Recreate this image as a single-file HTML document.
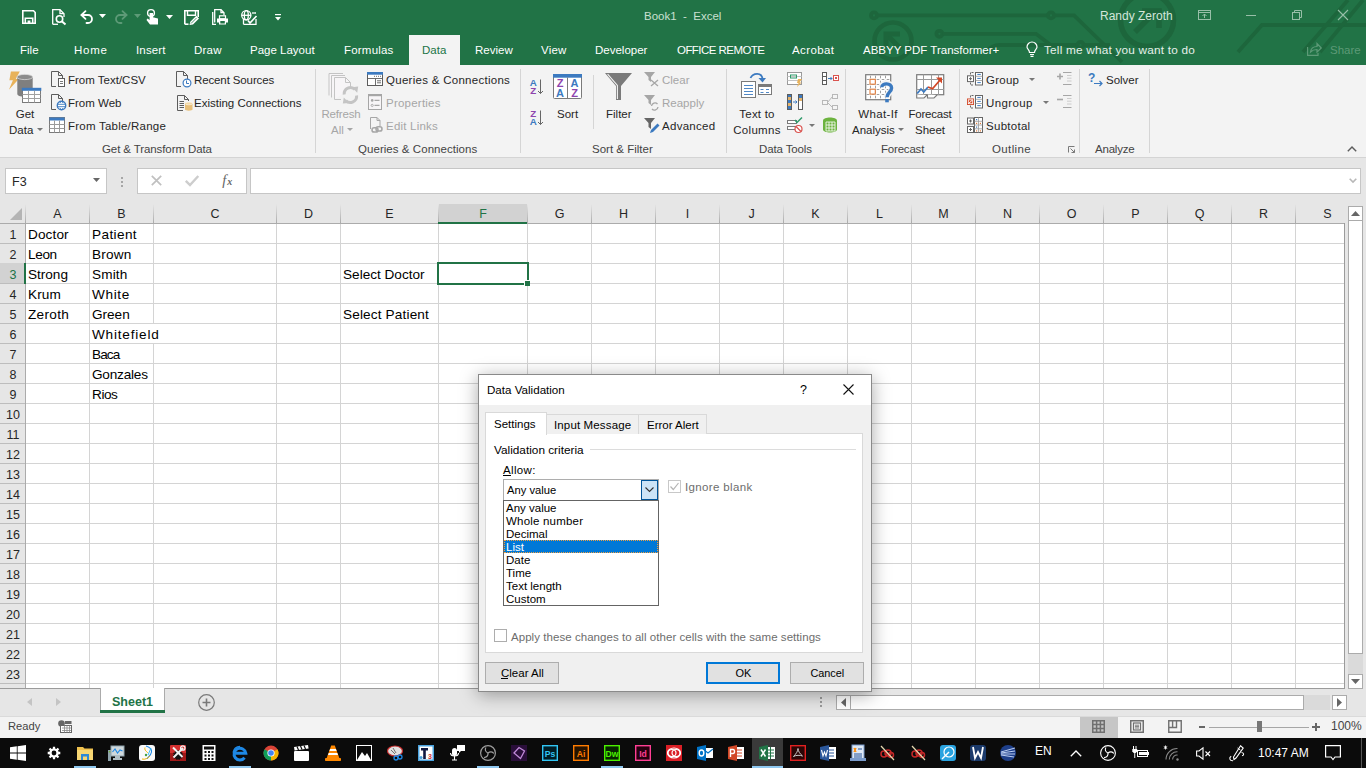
<!DOCTYPE html>
<html><head><meta charset="utf-8"><title>Excel Data Validation</title>
<style>
html,body{margin:0;padding:0;width:1366px;height:768px;overflow:hidden;background:#fff;}
body{position:relative;font-family:"Liberation Sans",sans-serif;}
.t{position:absolute;white-space:nowrap;line-height:20px;font-family:"Liberation Sans",sans-serif;}
svg{overflow:visible}
</style></head><body>
<div style="position:absolute;left:0px;top:0px;width:1366px;height:65px;background:#217346"></div>
<svg style="position:absolute;left:860px;top:0px;" width="506" height="65" viewBox="0 0 506 65">
<g fill="none" stroke="#1d663c" stroke-width="3.8" stroke-linecap="butt">
<circle cx="14" cy="15.4" r="3"/><line x1="17" y1="15.4" x2="188" y2="15.4"/>
<circle cx="191" cy="15.4" r="3"/><path d="M194 15.4 H214 L262 62"/>
<circle cx="79.4" cy="33.8" r="3"/><path d="M82.4 33.8 H176 L192 46"/>
<path d="M126 52 C130 47 134 45 140 45 H217"/><circle cx="220.5" cy="45" r="3"/><path d="M223.5 45 H250"/>
<circle cx="33" cy="41" r="18.5" stroke-width="4.6"/>
<path d="M41 49 L26 34" stroke-width="5"/><path d="M23.5 34 H40 M26 31.5 V48" stroke-width="5"/>
<circle cx="287" cy="20" r="26.5" stroke-width="5.5"/>
<path d="M275 32 L296 11" stroke-width="5.5"/><path d="M282 11 H299 V28" stroke-width="5.5"/>
<path d="M378 52 L402 25 H506"/>
<path d="M488 0 L443 52"/><path d="M503 0 L460 52"/>
</g></svg>
<svg style="position:absolute;left:22px;top:10px;" width="14" height="14" viewBox="0 0 14 14"><g fill="none" stroke="#ffffff" stroke-width="1.6"><path d="M0.8 0.8 H11.5 L13.2 2.5 V13.2 H0.8Z"/><path d="M3.3 13 V8.3 H10.7 V13"/></g><rect x="5.6" y="10.5" width="2.8" height="2.7" fill="#ffffff"/></svg>
<svg style="position:absolute;left:52px;top:9px;" width="15" height="16" viewBox="0 0 15 16"><g fill="none" stroke="#ffffff" stroke-width="1.3"><path d="M0.7 15.3 V0.7 H8 L12 4.7 V8"/><path d="M8 0.7 V4.7 H12"/><path d="M0.7 15.3 H6"/><circle cx="7.5" cy="10" r="3.2" stroke-width="1.6"/><path d="M9.8 12.3 L13.5 15.5" stroke-width="2"/></g></svg>
<svg style="position:absolute;left:80px;top:10px;" width="14" height="13" viewBox="0 0 14 13"><g fill="none" stroke="#ffffff" stroke-width="1.8" stroke-linecap="round"><path d="M1.5 5 L5.5 1.2 M1.5 5 L5.5 8.8"/><path d="M1.5 5 H8 A4 4 0 0 1 8 13 H6.5"/></g></svg>
<svg style="position:absolute;left:99px;top:14px;" width="7" height="4" viewBox="0 0 7 4"><path d="M0 0 H7 L3.5 4Z" fill="#ffffff"/></svg>
<svg style="position:absolute;left:114px;top:10px;" width="14" height="13" viewBox="0 0 14 13"><g fill="none" stroke="#5d9a77" stroke-width="1.8" stroke-linecap="round"><path d="M12.5 5 L8.5 1.2 M12.5 5 L8.5 8.8"/><path d="M12.5 5 H6 A4 4 0 0 0 6 13 H7.5"/></g></svg>
<svg style="position:absolute;left:134px;top:14px;" width="7" height="4" viewBox="0 0 7 4"><path d="M0 0 H7 L3.5 4Z" fill="#5d9a77"/></svg>
<svg style="position:absolute;left:146px;top:9px;" width="13" height="16" viewBox="0 0 13 16"><g fill="#ffffff"><circle cx="5" cy="4" r="3.4" fill="none" stroke="#ffffff" stroke-width="1.4"/><path d="M3.6 4 V11 L1.5 9.5 L0.5 11 L4 15.5 H12 V9.5 L7 8.2 V4Z"/></g></svg>
<svg style="position:absolute;left:166px;top:15px;" width="7" height="4" viewBox="0 0 7 4"><path d="M0 0 H7 L3.5 4Z" fill="#ffffff"/></svg>
<svg style="position:absolute;left:184px;top:10px;" width="15" height="15" viewBox="0 0 15 15"><g fill="none" stroke="#ffffff" stroke-width="1.6"><path d="M0.8 14.2 V0.8 H14.2 V7"/><path d="M3.5 1 V5.2 H11.5 V1" stroke-width="1.4"/><path d="M0.8 14.2 H4.5"/></g><path d="M5.5 15 L6.3 11.8 L12.3 5.8 L15 8.5 L9 14.5Z" fill="#ffffff"/><path d="M7 13.5 L12.5 8" stroke="#217346" stroke-width="0.8"/></svg>
<svg style="position:absolute;left:212px;top:9px;" width="17" height="16" viewBox="0 0 17 16"><g fill="none" stroke="#ffffff" stroke-width="1.3"><path d="M2.7 13.5 V0.7 H9 L12 3.7 V6"/><path d="M9 0.7 V3.7 H12"/><path d="M0.7 3 V15.3 H4"/></g><rect x="7.5" y="6.8" width="6" height="3" fill="none" stroke="#ffffff" stroke-width="1.2"/><path d="M5 9.5 H16 V13.5 H14 V15.5 H7 V13.5 H5Z" fill="#ffffff"/><rect x="8.3" y="12" width="4.5" height="2.5" fill="#217346"/></svg>
<svg style="position:absolute;left:241px;top:10px;" width="16" height="15" viewBox="0 0 16 15"><g fill="none" stroke="#ffffff" stroke-width="1.3"><circle cx="5.3" cy="5.3" r="4.6"/><ellipse cx="5.3" cy="5.3" rx="2" ry="4.6"/><path d="M0.7 5.3 H10"/><path d="M2.5 14.3 V8.5"/><path d="M11 3 H15"/><path d="M2.5 14.3 H15 V9"/><path d="M7 10.5 L9 13 L15.5 6" stroke-width="1.7"/></g></svg>
<svg style="position:absolute;left:275px;top:14px;" width="6" height="7" viewBox="0 0 6 7"><g fill="#ffffff"><rect x="0" y="0" width="6" height="1.2"/><path d="M0 3 H6 L3 6.5Z"/></g></svg>
<div class="t" style="left:644px;top:6px;font-size:11.5px;color:#c9e0d1;font-weight:normal;">Book1&nbsp; -&nbsp; Excel</div>
<div class="t" style="left:1100px;top:6px;font-size:12px;color:#d3e6da;font-weight:normal;">Randy Zeroth</div>
<svg style="position:absolute;left:1198px;top:10px;" width="13" height="10" viewBox="0 0 13 10"><g fill="none" stroke="#98bfa8" stroke-width="1"><rect x="0.5" y="0.5" width="12" height="9"/><path d="M0.5 2.5 H12.5"/><path d="M6.5 8 V4 M4.5 6 L6.5 4 L8.5 6"/></g></svg>
<div style="position:absolute;left:1246px;top:15px;width:10px;height:1px;background:#98bfa8"></div>
<svg style="position:absolute;left:1292px;top:10px;" width="10" height="10" viewBox="0 0 10 10"><g fill="none" stroke="#98bfa8" stroke-width="1"><rect x="0.5" y="2.5" width="7" height="7"/><path d="M2.5 2.5 V0.5 H9.5 V7.5 H7.5"/></g></svg>
<svg style="position:absolute;left:1338px;top:10px;" width="10" height="10" viewBox="0 0 10 10"><g stroke="#98bfa8" stroke-width="1.1"><path d="M0 0 L10 10 M10 0 L0 10"/></g></svg>
<div class="t" style="left:20px;top:40px;font-size:11.5px;color:#ffffff;font-weight:normal;letter-spacing:0px">File</div>
<div class="t" style="left:74px;top:40px;font-size:11.5px;color:#ffffff;font-weight:normal;letter-spacing:0.75px">Home</div>
<div class="t" style="left:136px;top:40px;font-size:11.5px;color:#ffffff;font-weight:normal;letter-spacing:0.15px">Insert</div>
<div class="t" style="left:194px;top:40px;font-size:11.5px;color:#ffffff;font-weight:normal;letter-spacing:0.2px">Draw</div>
<div class="t" style="left:250px;top:40px;font-size:11.5px;color:#ffffff;font-weight:normal;letter-spacing:0px">Page Layout</div>
<div class="t" style="left:344px;top:40px;font-size:11.5px;color:#ffffff;font-weight:normal;letter-spacing:0.2px">Formulas</div>
<div class="t" style="left:475px;top:40px;font-size:11.5px;color:#ffffff;font-weight:normal;letter-spacing:0px">Review</div>
<div class="t" style="left:541px;top:40px;font-size:11.5px;color:#ffffff;font-weight:normal;letter-spacing:0.2px">View</div>
<div class="t" style="left:595px;top:40px;font-size:11.5px;color:#ffffff;font-weight:normal;letter-spacing:0px">Developer</div>
<div class="t" style="left:677px;top:40px;font-size:11.5px;color:#ffffff;font-weight:normal;letter-spacing:-0.55px">OFFICE REMOTE</div>
<div class="t" style="left:792px;top:40px;font-size:11.5px;color:#ffffff;font-weight:normal;letter-spacing:0.4px">Acrobat</div>
<div class="t" style="left:863px;top:40px;font-size:11.5px;color:#ffffff;font-weight:normal;letter-spacing:0px">ABBYY PDF Transformer+</div>
<div style="position:absolute;left:409px;top:35px;width:51px;height:30px;background:#f3f3f3"></div>
<div class="t" style="left:422px;top:40px;font-size:11.5px;color:#217346;font-weight:normal;">Data</div>
<svg style="position:absolute;left:1026px;top:42px;" width="12" height="15" viewBox="0 0 12 15"><g fill="none" stroke="#ffffff" stroke-width="1.2"><path d="M3.5 10.5 C3.5 8 1 7 1 5 A5 5 0 0 1 11 5 C11 7 8.5 8 8.5 10.5Z"/><path d="M4 12.5 H8 M4.5 14.3 H7.5"/></g></svg>
<div class="t" style="left:1044px;top:40px;font-size:11.8px;color:#e6f0ea;font-weight:normal;letter-spacing:0.2px">Tell me what you want to do</div>
<svg style="position:absolute;left:1307px;top:42px;" width="15" height="14" viewBox="0 0 15 14"><g fill="none" stroke="#5d9a77" stroke-width="1.2"><path d="M0.6 5 V13.4 H11 V11"/><path d="M3.5 10 C4 6 7 4.5 10 4.5 V1.5 L14.3 6 L10 10.2 V7.5 C7 7.5 5 8.5 3.5 10Z"/></g></svg>
<div class="t" style="left:1330px;top:40px;font-size:11.5px;color:#5d9a77;font-weight:normal;">Share</div>
<div style="position:absolute;left:0px;top:65px;width:1366px;height:92px;background:#f3f3f3"></div>
<div style="position:absolute;left:0px;top:157px;width:1366px;height:1px;background:#d4d4d4"></div>
<div style="position:absolute;left:315px;top:69px;width:1px;height:84px;background:#d5d5d5"></div>
<div style="position:absolute;left:520px;top:69px;width:1px;height:84px;background:#d5d5d5"></div>
<div style="position:absolute;left:726px;top:69px;width:1px;height:84px;background:#d5d5d5"></div>
<div style="position:absolute;left:845px;top:69px;width:1px;height:84px;background:#d5d5d5"></div>
<div style="position:absolute;left:959px;top:69px;width:1px;height:84px;background:#d5d5d5"></div>
<div style="position:absolute;left:1079px;top:69px;width:1px;height:84px;background:#d5d5d5"></div>
<div style="position:absolute;left:1149px;top:69px;width:1px;height:84px;background:#d5d5d5"></div>
<div style="position:absolute;left:593px;top:75px;width:1px;height:54px;background:#d5d5d5"></div>
<div class="t" style="left:102px;top:139px;font-size:11.5px;color:#444444;font-weight:normal;letter-spacing:-0.1px;">Get &amp; Transform Data</div>
<div class="t" style="left:358px;top:139px;font-size:11.5px;color:#444444;font-weight:normal;letter-spacing:0.05px;">Queries &amp; Connections</div>
<div class="t" style="left:592px;top:139px;font-size:11.5px;color:#444444;font-weight:normal;">Sort &amp; Filter</div>
<div class="t" style="left:759px;top:139px;font-size:11.5px;color:#444444;font-weight:normal;letter-spacing:-0.12px;">Data Tools</div>
<div class="t" style="left:881px;top:139px;font-size:11.5px;color:#444444;font-weight:normal;letter-spacing:-0.2px;">Forecast</div>
<div class="t" style="left:992px;top:139px;font-size:11.5px;color:#444444;font-weight:normal;letter-spacing:0.38px;">Outline</div>
<div class="t" style="left:1095px;top:139px;font-size:11.5px;color:#444444;font-weight:normal;letter-spacing:-0.22px;">Analyze</div>
<svg style="position:absolute;left:9px;top:71px;" width="33" height="33" viewBox="0 0 33 33">
<path d="M1.9 0.4 H10.8 L6.8 7.9 H9.8 L-0.1 18.7 L3.9 9.3 H0.4Z" fill="#e8b25a"/>
<path d="M8.3 6 V23 C8.3 24.5 11 25.7 15.8 25.7 C20.6 25.7 23.7 24.5 23.7 23 V6Z" fill="#7f7f7f"/>
<ellipse cx="15.8" cy="6" rx="7.9" ry="2.6" fill="#8c8c8c" stroke="#d8d8d8" stroke-width="0.8"/>
<rect x="13.5" y="17.5" width="18" height="14" fill="#fff" stroke="#7a7a7a" stroke-width="1"/>
<rect x="12.8" y="16.8" width="19.5" height="3" fill="#3c7ac0"/>
<path d="M13.5 23.5 H31.5 M13.5 27.5 H31.5 M19.5 19.8 V31.5 M25.5 19.8 V31.5" stroke="#a0a0a0" stroke-width="1"/>
</svg>
<div class="t" style="left:-175px;width:400px;text-align:center;top:104px;font-size:11.5px;color:#262626;font-weight:normal;">Get</div>
<div class="t" style="left:9px;top:120px;font-size:11.5px;color:#262626;font-weight:normal;">Data</div>
<svg style="position:absolute;left:37px;top:128px;" width="6" height="3" viewBox="0 0 6 3"><path d="M0 0 H6 L3 3Z" fill="#777"/></svg>
<svg style="position:absolute;left:50px;top:71px;" width="16" height="16" viewBox="0 0 16 16"><g fill="none" stroke="#5c5c5c" stroke-width="1"><path d="M1.5 15.5 V0.5 H8.5 L12.5 4.5 V8"/><path d="M8.5 0.5 V4.5 H12.5"/><path d="M1.5 15.5 H6"/></g><rect x="8.5" y="7.5" width="6" height="8" fill="#fff" stroke="#5c5c5c"/><path d="M10 10.5 H13 M10 12.5 H13" stroke="#7a7a7a" stroke-width="1"/></svg>
<div class="t" style="left:68px;top:70px;font-size:11.5px;color:#262626;font-weight:normal;">From Text/CSV</div>
<svg style="position:absolute;left:50px;top:94px;" width="16" height="16" viewBox="0 0 16 16"><g fill="none" stroke="#5c5c5c" stroke-width="1"><path d="M1.5 15.5 V0.5 H8.5 L12.5 4.5 V8"/><path d="M8.5 0.5 V4.5 H12.5"/><path d="M1.5 15.5 H6"/></g><circle cx="11.5" cy="11.5" r="4.2" fill="#fff" stroke="#3c7ac0" stroke-width="1.4"/><path d="M7.5 10.3 H15.5 M7.5 12.7 H15.5" stroke="#3c7ac0" stroke-width="0.9"/><path d="M11.5 7.3 L9.8 9 M11.5 7.3 L13.2 9 M11.5 15.7 L9.8 14 M11.5 15.7 L13.2 14" stroke="#3c7ac0" stroke-width="0.9"/></svg>
<div class="t" style="left:68px;top:93px;font-size:11.5px;color:#262626;font-weight:normal;">From Web</div>
<svg style="position:absolute;left:49px;top:117px;" width="16" height="16" viewBox="0 0 16 16"><rect x="0.5" y="0.5" width="15" height="15" fill="#fff" stroke="#7a7a7a"/><rect x="0.5" y="0.5" width="15" height="3" fill="#3c7ac0"/><path d="M0.5 7.5 H15.5 M0.5 11.5 H15.5 M5.5 3.5 V15.5 M10.5 3.5 V15.5" stroke="#9a9a9a"/></svg>
<div class="t" style="left:68px;top:116px;font-size:11.5px;color:#262626;font-weight:normal;letter-spacing:0.23px;">From Table/Range</div>
<svg style="position:absolute;left:175px;top:71px;" width="16" height="16" viewBox="0 0 16 16"><g fill="none" stroke="#5c5c5c" stroke-width="1"><path d="M1.5 15.5 V0.5 H8.5 L12.5 4.5 V8"/><path d="M8.5 0.5 V4.5 H12.5"/><path d="M1.5 15.5 H6"/></g><circle cx="12" cy="12" r="3.9" fill="#fff" stroke="#3c7ac0" stroke-width="1.2"/><path d="M11.5 9.5 V12.5 H14" fill="none" stroke="#3c7ac0" stroke-width="1"/></svg>
<div class="t" style="left:194px;top:70px;font-size:11.5px;color:#262626;font-weight:normal;letter-spacing:-0.12px;">Recent Sources</div>
<svg style="position:absolute;left:177px;top:95px;" width="16" height="16" viewBox="0 0 16 16"><g fill="none" stroke="#5c5c5c" stroke-width="1"><path d="M0.5 15.5 V0.5 H7.5 L11.5 4.5 V6"/><path d="M7.5 0.5 V4.5 H11.5"/><path d="M0.5 15.5 H6"/><path d="M2.5 6.5 H7 M2.5 8.5 H7 M2.5 10.5 H7 M2.5 12.5 H7"/></g><path d="M8 8.5 C8 7 15.5 7 15.5 8.5 V14.5 C15.5 16 8 16 8 14.5Z" fill="#e8c07a"/><ellipse cx="11.75" cy="8.5" rx="3.75" ry="1.3" fill="#f3d9a6" stroke="#fff" stroke-width="0.5"/></svg>
<div class="t" style="left:194px;top:93px;font-size:11.5px;color:#262626;font-weight:normal;">Existing Connections</div>
<svg style="position:absolute;left:328px;top:73px;" width="31" height="30" viewBox="0 0 31 30"><g fill="#f7f5f7" stroke="#c4c4c4" stroke-width="1">
<path d="M1 22.5 V0.5 H15"/><path d="M3.5 24.5 V2.5 H17"/><path d="M6.5 26.5 V4.5 H17.5 L22.5 9.5 V15"/><path d="M17.5 4.5 V9.5 H22.5" fill="none"/><path d="M6.5 26.5 H13" fill="none"/></g>
<g fill="none" stroke="#c4c4c4" stroke-width="3"><path d="M16.2 21.5 A6.3 6.3 0 0 1 27 16.5"/><path d="M28.6 22.5 A6.3 6.3 0 0 1 17.8 27.5"/></g>
<path d="M24 14.2 L30.2 13.5 L29.2 19.8Z M21 30 L14.8 30.6 L15.8 24.4Z" fill="#c4c4c4"/></svg>
<div class="t" style="left:141px;width:400px;text-align:center;top:104px;font-size:11.5px;color:#a6a6a6;font-weight:normal;letter-spacing:-0.18px;">Refresh</div>
<div class="t" style="left:331px;top:120px;font-size:11.5px;color:#a6a6a6;font-weight:normal;">All</div>
<svg style="position:absolute;left:347px;top:128px;" width="6" height="3" viewBox="0 0 6 3"><path d="M0 0 H6 L3 3Z" fill="#a6a6a6"/></svg>
<svg style="position:absolute;left:367px;top:72px;" width="16" height="14" viewBox="0 0 16 14"><rect x="0.5" y="0.5" width="15" height="13" fill="#fff" stroke="#5c5c5c"/><rect x="0" y="0" width="16" height="2.7" fill="#3c7ac0"/><path d="M0.5 6.5 H15.5 M8.5 6.5 V13.5 M10 8.8 H14 M10 10.8 H14" stroke="#5c5c5c" stroke-width="0.9"/><path d="M7 4.3 H8 M9 4.3 H10 M11 4.3 H12 M13 4.3 H14" stroke="#5c5c5c" stroke-width="0.9"/></svg>
<div class="t" style="left:386px;top:70px;font-size:11.5px;color:#262626;font-weight:normal;letter-spacing:0.28px;">Queries &amp; Connections</div>
<svg style="position:absolute;left:368px;top:94px;" width="14" height="16" viewBox="0 0 14 16"><rect x="0.5" y="0.5" width="13" height="15" fill="#f7f5f7" stroke="#a6a6a6"/><rect x="0" y="0" width="14" height="2.2" fill="#a6a6a6"/><circle cx="4.2" cy="6.4" r="1.3" fill="#a6a6a6"/><circle cx="4.2" cy="11.4" r="1.1" fill="none" stroke="#a6a6a6" stroke-width="0.9"/><path d="M6.5 6.4 H11.5 M6.5 11.4 H11.5" stroke="#a6a6a6" stroke-width="1.1"/></svg>
<div class="t" style="left:386px;top:93px;font-size:11.5px;color:#a6a6a6;font-weight:normal;letter-spacing:0.23px;">Properties</div>
<svg style="position:absolute;left:369px;top:117px;" width="14" height="16" viewBox="0 0 14 16"><g fill="none" stroke="#a6a6a6"><path d="M1.5 12 V0.5 H8 L11 3.5 V9"/><path d="M8 0.5 V3.5 H11"/></g><g fill="none" stroke="#a6a6a6" stroke-width="1.5"><rect x="3" y="10.8" width="6" height="4.2" rx="2.1"/><rect x="7" y="9.8" width="6" height="4.2" rx="2.1"/></g></svg>
<div class="t" style="left:386px;top:116px;font-size:11.5px;color:#a6a6a6;font-weight:normal;letter-spacing:0.22px;">Edit Links</div>
<svg style="position:absolute;left:530px;top:79px;" width="14" height="16" viewBox="0 0 14 16"><text x="3.3" y="7.2" text-anchor="middle" font-family="Liberation Sans" font-size="9.8" font-weight="bold" fill="#3c7ac0" transform="scale(1,0.92)">A</text><text x="3.3" y="15.2" text-anchor="middle" font-family="Liberation Sans" font-size="9.8" font-weight="bold" fill="#8e44ad" transform="scale(1,0.98)">Z</text><path d="M10.5 0.5 V14.5 M8 12 L10.5 14.5 L13 12" fill="none" stroke="#666" stroke-width="1"/></svg>
<svg style="position:absolute;left:530px;top:110px;" width="14" height="16" viewBox="0 0 14 16"><text x="3.3" y="7.2" text-anchor="middle" font-family="Liberation Sans" font-size="9.8" font-weight="bold" fill="#8e44ad" transform="scale(1,0.92)">Z</text><text x="3.3" y="15.2" text-anchor="middle" font-family="Liberation Sans" font-size="9.8" font-weight="bold" fill="#3c7ac0" transform="scale(1,0.98)">A</text><path d="M10.5 0.5 V14.5 M8 12 L10.5 14.5 L13 12" fill="none" stroke="#666" stroke-width="1"/></svg>
<svg style="position:absolute;left:553px;top:74px;" width="29" height="25" viewBox="0 0 29 25"><rect x="0.5" y="0.5" width="28" height="24" rx="1" fill="#fff" stroke="#7a7a7a"/><rect x="0" y="0" width="29" height="3.7" fill="#3c7ac0"/><path d="M14.5 3.5 V24.5" stroke="#7a7a7a"/><g font-family="Liberation Sans" font-size="11" font-weight="bold" text-anchor="middle"><text x="7" y="13" fill="#8e44ad">Z</text><text x="7" y="23" fill="#3c7ac0">A</text><text x="21.5" y="13" fill="#3c7ac0">A</text><text x="21.5" y="23" fill="#8e44ad">Z</text></g></svg>
<div class="t" style="left:557px;top:104px;font-size:11.5px;color:#262626;font-weight:normal;">Sort</div>
<svg style="position:absolute;left:605px;top:73px;" width="27" height="27" viewBox="0 0 27 27"><path d="M0 0 H27 L16 13 V27 H11 V13Z" fill="#7a7a7a"/><path d="M2.6 1.2 L12.4 12.4 V26" fill="none" stroke="#f3f3f3" stroke-width="1.1"/></svg>
<div class="t" style="left:606px;top:104px;font-size:11.5px;color:#262626;font-weight:normal;">Filter</div>
<svg style="position:absolute;left:644px;top:72px;" width="15" height="15" viewBox="0 0 15 15"><path d="M0 0 H11 L7 5 V10 L4.5 8 V5Z" fill="#a6a6a6"/><path d="M7 8 L14 14 M14 8 L7 14" stroke="#a6a6a6" stroke-width="1.3"/></svg>
<div class="t" style="left:662px;top:70px;font-size:11.5px;color:#a6a6a6;font-weight:normal;">Clear</div>
<svg style="position:absolute;left:644px;top:95px;" width="15" height="15" viewBox="0 0 15 15"><path d="M0 0 H11 L7 5 V10 L4.5 8 V5Z" fill="#a6a6a6"/><g fill="none" stroke="#a6a6a6" stroke-width="1.3"><path d="M7.5 11 A3.5 3.5 0 0 1 13.5 9"/><path d="M14 12 A3.5 3.5 0 0 1 8 14"/></g></svg>
<div class="t" style="left:662px;top:93px;font-size:11.5px;color:#a6a6a6;font-weight:normal;">Reapply</div>
<svg style="position:absolute;left:644px;top:118px;" width="16" height="16" viewBox="0 0 16 16"><path d="M0 0 H11 L7 5 V11 L4.5 9 V5Z" fill="#666"/><path d="M6 15 L7 12 L13.5 5.5 L15.5 7.5 L9 14Z" fill="#3c7ac0"/></svg>
<div class="t" style="left:662px;top:116px;font-size:11.5px;color:#262626;font-weight:normal;letter-spacing:0.28px;">Advanced</div>
<svg style="position:absolute;left:741px;top:73px;" width="31" height="27" viewBox="0 0 31 27"><rect x="0.5" y="8.5" width="14" height="16" fill="#fff" stroke="#7a7a7a"/><path d="M3 12.5 H12 M3 15.5 H12 M3 18.5 H12 M3 21.5 H12" stroke="#3c7ac0" stroke-width="0.9"/><rect x="17.5" y="11.5" width="13" height="10" fill="#fff" stroke="#7a7a7a"/><rect x="17.5" y="11.5" width="13" height="2.5" fill="#7a7a7a"/><path d="M19.5 16.5 H22.5 M25 16.5 H28 M19.5 19.5 H22.5 M25 19.5 H28" stroke="#3c7ac0" stroke-width="0.9"/><path d="M9.5 5 C12 -0.5 21 -1 21.5 6" fill="none" stroke="#3c7ac0" stroke-width="1.8"/><path d="M17.5 5 L21.5 9.5 L25 5Z" fill="#3c7ac0"/></svg>
<div class="t" style="left:557px;width:400px;text-align:center;top:104px;font-size:11.5px;color:#262626;font-weight:normal;letter-spacing:0.2px;">Text to</div>
<div class="t" style="left:557px;width:400px;text-align:center;top:120px;font-size:11.5px;color:#262626;font-weight:normal;letter-spacing:0.3px;">Columns</div>
<svg style="position:absolute;left:787px;top:72px;" width="16" height="15" viewBox="0 0 16 15"><rect x="0.5" y="0.5" width="14" height="12" fill="#fff" stroke="#9a9a9a"/><path d="M0.5 4.5 H14.5 M0.5 8.5 H14.5" stroke="#c4c4c4"/><rect x="3.5" y="3" width="6" height="3" fill="none" stroke="#2e9a6a"/><path d="M11 7 H15 L12.5 10.5 H14.5 L10 15 L11.5 11 H10Z" fill="#e8b25a"/></svg>
<svg style="position:absolute;left:787px;top:94px;" width="16" height="16" viewBox="0 0 16 16"><rect x="0.5" y="0.5" width="4" height="15" fill="#fff" stroke="#5c5c5c"/><rect x="1" y="3" width="3" height="3" fill="#e3b36b"/><rect x="1" y="9" width="3" height="3" fill="#e3b36b"/><rect x="1" y="1" width="3" height="2" fill="#3c7ac0"/><rect x="1" y="6" width="3" height="3" fill="#3c7ac0"/><rect x="1" y="12" width="3" height="3" fill="#3c7ac0"/><rect x="11.5" y="0.5" width="4" height="15" fill="#fff" stroke="#5c5c5c"/><rect x="12" y="1" width="3" height="3" fill="#3c7ac0"/><rect x="12" y="4" width="3" height="3" fill="#e3b36b"/><path d="M6 8 H10 M8.5 6.5 L10 8 L8.5 9.5" stroke="#3c7ac0" fill="none"/></svg>
<svg style="position:absolute;left:787px;top:117px;" width="16" height="16" viewBox="0 0 16 16"><rect x="0.5" y="3.5" width="9" height="3" fill="#fff" stroke="#7a7a7a"/><rect x="0.5" y="9.5" width="9" height="3" fill="#fff" stroke="#7a7a7a"/><path d="M8 3 L10 5.5 L15 0.5" fill="none" stroke="#2e9a6a" stroke-width="1.5"/><circle cx="11.5" cy="12" r="3.5" fill="#fff" stroke="#d9534f" stroke-width="1.2"/><path d="M9 9.5 L14 14.5" stroke="#d9534f" stroke-width="1.2"/></svg>
<svg style="position:absolute;left:809px;top:124px;" width="6" height="3" viewBox="0 0 6 3"><path d="M0 0 H6 L3 3Z" fill="#777"/></svg>
<svg style="position:absolute;left:822px;top:72px;" width="17" height="13" viewBox="0 0 17 13"><rect x="0.5" y="0.5" width="4" height="12" fill="#fff" stroke="#5c5c5c"/><path d="M0.5 4.5 H4.5 M0.5 8.5 H4.5" stroke="#5c5c5c"/><path d="M6 6.5 H10 M8.5 5 L10 6.5 L8.5 8" stroke="#3c7ac0" fill="none"/><rect x="11.5" y="3.5" width="5" height="5" fill="#fff" stroke="#d9534f"/><rect x="13" y="5" width="2" height="2" fill="#d9534f"/></svg>
<svg style="position:absolute;left:822px;top:94px;" width="16" height="16" viewBox="0 0 16 16"><g fill="#f5f5f5" stroke="#b8b8b8"><rect x="0.5" y="6.5" width="5" height="4"/><rect x="10.5" y="0.5" width="5" height="4"/><rect x="10.5" y="11.5" width="5" height="4"/><path d="M5.5 8.5 L10.5 2.5 M5.5 8.5 L10.5 13.5" fill="none"/></g></svg>
<svg style="position:absolute;left:822px;top:117px;" width="16" height="16" viewBox="0 0 16 16"><path d="M1 3.5 C1 -0.5 15 -0.5 15 3.5 V12.5 C15 16.5 1 16.5 1 12.5Z" fill="#6db33f"/><path d="M4 5 H13 V14 H4Z M4 8 H13 M4 11 H13 M7 5 V14 M10 5 V14" fill="none" stroke="#ffffff" stroke-width="0.8"/></svg>
<svg style="position:absolute;left:865px;top:74px;" width="29" height="29" viewBox="0 0 29 29"><rect x="0.7" y="0.7" width="25" height="25" fill="#fff" stroke="#7a7a7a" stroke-width="1.2"/><path d="M0.5 5.5 H26 M0.5 10.5 H26 M0.5 15.5 H26 M0.5 20.5 H26 M5.5 0.5 V26 M10.5 0.5 V26 M15.5 0.5 V26 M20.5 0.5 V26" stroke="#a0a0a0" stroke-width="1" stroke-dasharray="2.6 2.4" stroke-dashoffset="-1.2"/><rect x="5" y="5.3" width="5.3" height="4.9" fill="#fff" stroke="#e07b39" stroke-width="1.1"/><rect x="5" y="15.2" width="5.3" height="4.9" fill="#fff" stroke="#e07b39" stroke-width="1.1"/><path d="M16.5 13 C16.5 8 27 8 27 14 C27 18.5 22 18.5 22 23.5" fill="none" stroke="#f3f3f3" stroke-width="6"/><path d="M16.8 13.2 C16.8 8.6 26.6 8.6 26.6 14 C26.6 18 22 18.3 22 23.2" fill="none" stroke="#3c7ac0" stroke-width="3.4"/><rect x="20.2" y="25" width="3.6" height="3.3" fill="#3c7ac0"/></svg>
<div class="t" style="left:678px;width:400px;text-align:center;top:104px;font-size:11.5px;color:#262626;font-weight:normal;letter-spacing:0.35px;">What-If</div>
<div class="t" style="left:852px;top:120px;font-size:11.5px;color:#262626;font-weight:normal;">Analysis</div>
<svg style="position:absolute;left:898px;top:128px;" width="6" height="3" viewBox="0 0 6 3"><path d="M0 0 H6 L3 3Z" fill="#777"/></svg>
<svg style="position:absolute;left:916px;top:74px;" width="29" height="25" viewBox="0 0 29 25"><rect x="0.7" y="0.7" width="27" height="20" fill="#fff" stroke="#7a7a7a" stroke-width="1.2"/><path d="M0.5 5.5 H28 M0.5 15.5 H28 M7.5 0.5 V21 M15.5 0.5 V21 M22.5 0.5 V21" stroke="#9a9a9a" stroke-width="1"/><path d="M0.7 20.5 V24 H8 L11 21 M11.5 20.5 V24 H18 L21 21" fill="#fff" stroke="#7a7a7a" stroke-width="1.1"/><path d="M1.2 19.5 L5 15 L7.8 18 L12 13" fill="none" stroke="#3c7ac0" stroke-width="1.8"/><path d="M12 13 L16.5 14.8 L24.5 5.5" fill="none" stroke="#d24726" stroke-width="1.8"/><path d="M20 3.5 H26 V9.5Z" fill="#d24726"/></svg>
<div class="t" style="left:730px;width:400px;text-align:center;top:104px;font-size:11.5px;color:#262626;font-weight:normal;letter-spacing:-0.2px;">Forecast</div>
<div class="t" style="left:730px;width:400px;text-align:center;top:120px;font-size:11.5px;color:#262626;font-weight:normal;">Sheet</div>
<svg style="position:absolute;left:967px;top:72px;" width="16" height="14" viewBox="0 0 16 14"><path d="M6.5 0.5 H3.5 V3 M3.5 10.5 V13 H6.5" fill="none" stroke="#666" stroke-dasharray="2 1"/><rect x="0.5" y="3.8" width="6" height="5.8" fill="#fff" stroke="#666"/><path d="M2 6.7 H5 M3.5 5.2 V8.2" stroke="#666"/><rect x="8.5" y="0.5" width="7" height="12.5" fill="#fff" stroke="#666"/><path d="M8.5 4.3 H15.5 M8.5 8.5 H15.5" stroke="#999" stroke-width="0.8"/><path d="M10.3 2.4 H13.8 M10.3 6.4 H13.8 M10.3 10.6 H13.8" stroke="#3c7ac0" stroke-width="1"/></svg>
<div class="t" style="left:986px;top:70px;font-size:11.5px;color:#262626;font-weight:normal;letter-spacing:0.25px;">Group</div>
<svg style="position:absolute;left:1029px;top:78px;" width="6" height="3" viewBox="0 0 6 3"><path d="M0 0 H6 L3 3Z" fill="#777"/></svg>
<svg style="position:absolute;left:967px;top:95px;" width="16" height="14" viewBox="0 0 16 14"><path d="M6.5 0.5 H3.5 V3 M3.5 10.5 V13 H6.5" fill="none" stroke="#666" stroke-dasharray="2 1"/><rect x="0" y="3.5" width="7" height="6.5" fill="#d24726"/><path d="M1.5 8.5 L5.5 5" stroke="#fff" stroke-width="1"/><rect x="1.3" y="4.8" width="4.4" height="3.9" fill="none" stroke="#fff" stroke-width="0.8"/><rect x="8.5" y="0.5" width="7" height="12.5" fill="#fff" stroke="#666"/><path d="M8.5 4.3 H15.5 M8.5 8.5 H15.5" stroke="#999" stroke-width="0.8"/><path d="M10.3 2.4 H13.8 M10.3 6.4 H13.8 M10.3 10.6 H13.8" stroke="#3c7ac0" stroke-width="1"/></svg>
<div class="t" style="left:986px;top:93px;font-size:11.5px;color:#262626;font-weight:normal;letter-spacing:0.4px;">Ungroup</div>
<svg style="position:absolute;left:1043px;top:101px;" width="6" height="3" viewBox="0 0 6 3"><path d="M0 0 H6 L3 3Z" fill="#777"/></svg>
<svg style="position:absolute;left:967px;top:117px;" width="16" height="16" viewBox="0 0 16 16"><rect x="0.5" y="1" width="6" height="6" fill="#fff" stroke="#666"/><path d="M2 4 H5 M3.5 2.5 V5.5" stroke="#666"/><rect x="0.5" y="9.5" width="6" height="6" fill="#fff" stroke="#666"/><path d="M2 12.5 H5 M3.5 11 V14" stroke="#666"/><rect x="7.5" y="0.5" width="8" height="15" fill="#fff" stroke="#666"/><path d="M7.5 4.3 H15.5 M7.5 8 H15.5 M7.5 11.8 H15.5 M11.5 0.5 V15.5" stroke="#999" stroke-width="0.8"/><g fill="#3c7ac0"><rect x="9" y="2" width="1.2" height="1.2"/><rect x="9" y="9.5" width="1.2" height="1.2"/></g><g fill="#e07b39"><rect x="9" y="5.8" width="1.2" height="1.2"/><rect x="12.8" y="5.8" width="1.2" height="1.2"/><rect x="9" y="13.3" width="1.2" height="1.2"/><rect x="12.8" y="13.3" width="1.2" height="1.2"/></g></svg>
<div class="t" style="left:986px;top:116px;font-size:11.5px;color:#262626;font-weight:normal;letter-spacing:0.28px;">Subtotal</div>
<svg style="position:absolute;left:1057px;top:72px;" width="15" height="13" viewBox="0 0 15 13"><path d="M0 4.5 H6 M3 1.5 V7.5" stroke="#a6a6a6" stroke-width="1.6"/><path d="M6 0.5 H14.5 M6 12.5 H14.5" stroke="#a6a6a6" stroke-width="1"/><path d="M10 3.5 H14.5 M10 6.2 H14.5 M10 9 H14.5" stroke="#c8c8c8" stroke-width="0.9"/></svg>
<svg style="position:absolute;left:1057px;top:95px;" width="15" height="13" viewBox="0 0 15 13"><path d="M0 4.5 H6" stroke="#a6a6a6" stroke-width="1.6"/><path d="M6 0.5 H14.5 M6 12.5 H14.5" stroke="#a6a6a6" stroke-width="1"/><path d="M10 3.5 H14.5 M10 6.2 H14.5 M10 9 H14.5" stroke="#c8c8c8" stroke-width="0.9"/></svg>
<svg style="position:absolute;left:1068px;top:146px;" width="7" height="7" viewBox="0 0 7 7"><path d="M0.5 6.5 V0.5 H6.5" fill="none" stroke="#7a7a7a"/><path d="M2.5 2.5 L6.5 6.5 M6.5 3.5 V6.5 H3.5" fill="none" stroke="#7a7a7a"/></svg>
<svg style="position:absolute;left:1088px;top:72px;" width="15" height="14" viewBox="0 0 15 14"><text x="0" y="10" font-family="Liberation Sans" font-size="12" font-weight="bold" fill="#3c7ac0">?</text><path d="M6 11.5 H14 M11.5 9 L14 11.5 L11.5 14" fill="none" stroke="#3c7ac0" stroke-width="1.2"/></svg>
<div class="t" style="left:1106px;top:70px;font-size:11.5px;color:#262626;font-weight:normal;">Solver</div>
<svg style="position:absolute;left:1347px;top:146px;" width="10" height="6" viewBox="0 0 10 6"><path d="M0.8 5.2 L5 1 L9.2 5.2" fill="none" stroke="#5c5c5c" stroke-width="1.4"/></svg>
<div style="position:absolute;left:0px;top:158px;width:1366px;height:531px;background:#e6e6e6"></div>
<div style="position:absolute;left:5px;top:168px;width:102px;height:26px;background:#fff;border:1px solid #c6c6c6;box-sizing:border-box"></div>
<div class="t" style="left:12px;top:172px;font-size:12.5px;color:#262626;font-weight:normal;">F3</div>
<svg style="position:absolute;left:93px;top:178px;" width="7" height="4" viewBox="0 0 7 4"><path d="M0 0 H7 L3.5 4Z" fill="#666"/></svg>
<div style="position:absolute;left:121px;top:177px;width:2px;height:2px;background:#a6a6a6"></div>
<div style="position:absolute;left:121px;top:181px;width:2px;height:2px;background:#a6a6a6"></div>
<div style="position:absolute;left:121px;top:185px;width:2px;height:2px;background:#a6a6a6"></div>
<div style="position:absolute;left:137px;top:168px;width:110px;height:26px;background:#fff;border:1px solid #c6c6c6;box-sizing:border-box"></div>
<svg style="position:absolute;left:151px;top:175px;" width="11" height="11" viewBox="0 0 11 11"><path d="M0.8 0.8 L10.2 10.2 M10.2 0.8 L0.8 10.2" stroke="#c0c0c0" stroke-width="1.7"/></svg>
<svg style="position:absolute;left:185px;top:175px;" width="14" height="11" viewBox="0 0 14 11"><path d="M0.8 5.8 L5 10 L13.3 1" fill="none" stroke="#cdcdcd" stroke-width="2.4"/></svg>
<svg style="position:absolute;left:221px;top:174px;" width="14" height="14" viewBox="0 0 14 14"><text x="1.2" y="11" font-family="Liberation Serif" font-style="italic" font-size="14.5" fill="#666">f</text><text x="6.2" y="11" font-family="Liberation Serif" font-style="italic" font-weight="bold" font-size="10" fill="#666">x</text></svg>
<div style="position:absolute;left:250px;top:168px;width:1111px;height:26px;background:#fff;border:1px solid #c6c6c6;box-sizing:border-box"></div>
<svg style="position:absolute;left:1349px;top:178px;" width="8" height="5" viewBox="0 0 8 5"><path d="M0.7 0.7 L4 4 L7.3 0.7" fill="none" stroke="#b8b8b8" stroke-width="1.6"/></svg>
<div style="position:absolute;left:25px;top:223px;width:1320px;height:465px;background:#fff"></div>
<div style="position:absolute;left:438px;top:204px;width:89px;height:19px;background:#d2d2d2"></div>
<div style="position:absolute;left:89px;top:204px;width:1px;height:19px;background:linear-gradient(#e6e6e6,#ababab)"></div>
<div style="position:absolute;left:153px;top:204px;width:1px;height:19px;background:linear-gradient(#e6e6e6,#ababab)"></div>
<div style="position:absolute;left:276px;top:204px;width:1px;height:19px;background:linear-gradient(#e6e6e6,#ababab)"></div>
<div style="position:absolute;left:340px;top:204px;width:1px;height:19px;background:linear-gradient(#e6e6e6,#ababab)"></div>
<div style="position:absolute;left:438px;top:204px;width:1px;height:19px;background:linear-gradient(#e6e6e6,#ababab)"></div>
<div style="position:absolute;left:527px;top:204px;width:1px;height:19px;background:linear-gradient(#e6e6e6,#ababab)"></div>
<div style="position:absolute;left:591px;top:204px;width:1px;height:19px;background:linear-gradient(#e6e6e6,#ababab)"></div>
<div style="position:absolute;left:655px;top:204px;width:1px;height:19px;background:linear-gradient(#e6e6e6,#ababab)"></div>
<div style="position:absolute;left:719px;top:204px;width:1px;height:19px;background:linear-gradient(#e6e6e6,#ababab)"></div>
<div style="position:absolute;left:783px;top:204px;width:1px;height:19px;background:linear-gradient(#e6e6e6,#ababab)"></div>
<div style="position:absolute;left:847px;top:204px;width:1px;height:19px;background:linear-gradient(#e6e6e6,#ababab)"></div>
<div style="position:absolute;left:911px;top:204px;width:1px;height:19px;background:linear-gradient(#e6e6e6,#ababab)"></div>
<div style="position:absolute;left:975px;top:204px;width:1px;height:19px;background:linear-gradient(#e6e6e6,#ababab)"></div>
<div style="position:absolute;left:1039px;top:204px;width:1px;height:19px;background:linear-gradient(#e6e6e6,#ababab)"></div>
<div style="position:absolute;left:1103px;top:204px;width:1px;height:19px;background:linear-gradient(#e6e6e6,#ababab)"></div>
<div style="position:absolute;left:1167px;top:204px;width:1px;height:19px;background:linear-gradient(#e6e6e6,#ababab)"></div>
<div style="position:absolute;left:1231px;top:204px;width:1px;height:19px;background:linear-gradient(#e6e6e6,#ababab)"></div>
<div style="position:absolute;left:1295px;top:204px;width:1px;height:19px;background:linear-gradient(#e6e6e6,#ababab)"></div>
<div style="position:absolute;left:25px;top:204px;width:1px;height:19px;background:linear-gradient(#e6e6e6,#ababab)"></div>
<div style="position:absolute;left:0px;top:223px;width:1345px;height:1px;background:#ababab"></div>
<div style="position:absolute;left:438px;top:222px;width:89px;height:2px;background:#217346"></div>
<div class="t" style="left:-142.5px;width:400px;text-align:center;top:204px;font-size:12.5px;color:#262626;font-weight:normal;">A</div>
<div class="t" style="left:-78.5px;width:400px;text-align:center;top:204px;font-size:12.5px;color:#262626;font-weight:normal;">B</div>
<div class="t" style="left:15.0px;width:400px;text-align:center;top:204px;font-size:12.5px;color:#262626;font-weight:normal;">C</div>
<div class="t" style="left:108.5px;width:400px;text-align:center;top:204px;font-size:12.5px;color:#262626;font-weight:normal;">D</div>
<div class="t" style="left:189.5px;width:400px;text-align:center;top:204px;font-size:12.5px;color:#262626;font-weight:normal;">E</div>
<div class="t" style="left:283.0px;width:400px;text-align:center;top:204px;font-size:12.5px;color:#217346;font-weight:normal;">F</div>
<div class="t" style="left:359.5px;width:400px;text-align:center;top:204px;font-size:12.5px;color:#262626;font-weight:normal;">G</div>
<div class="t" style="left:423.5px;width:400px;text-align:center;top:204px;font-size:12.5px;color:#262626;font-weight:normal;">H</div>
<div class="t" style="left:487.5px;width:400px;text-align:center;top:204px;font-size:12.5px;color:#262626;font-weight:normal;">I</div>
<div class="t" style="left:551.5px;width:400px;text-align:center;top:204px;font-size:12.5px;color:#262626;font-weight:normal;">J</div>
<div class="t" style="left:615.5px;width:400px;text-align:center;top:204px;font-size:12.5px;color:#262626;font-weight:normal;">K</div>
<div class="t" style="left:679.5px;width:400px;text-align:center;top:204px;font-size:12.5px;color:#262626;font-weight:normal;">L</div>
<div class="t" style="left:743.5px;width:400px;text-align:center;top:204px;font-size:12.5px;color:#262626;font-weight:normal;">M</div>
<div class="t" style="left:807.5px;width:400px;text-align:center;top:204px;font-size:12.5px;color:#262626;font-weight:normal;">N</div>
<div class="t" style="left:871.5px;width:400px;text-align:center;top:204px;font-size:12.5px;color:#262626;font-weight:normal;">O</div>
<div class="t" style="left:935.5px;width:400px;text-align:center;top:204px;font-size:12.5px;color:#262626;font-weight:normal;">P</div>
<div class="t" style="left:999.5px;width:400px;text-align:center;top:204px;font-size:12.5px;color:#262626;font-weight:normal;">Q</div>
<div class="t" style="left:1063.5px;width:400px;text-align:center;top:204px;font-size:12.5px;color:#262626;font-weight:normal;">R</div>
<div class="t" style="left:1127.5px;width:400px;text-align:center;top:204px;font-size:12.5px;color:#262626;font-weight:normal;">S</div>
<svg style="position:absolute;left:10px;top:208px;" width="12" height="12" viewBox="0 0 12 12"><path d="M12 0 V12 H0Z" fill="#b4b4b4"/></svg>
<div style="position:absolute;left:89px;top:224px;width:1px;height:464px;background:#d4d4d4"></div>
<div style="position:absolute;left:153px;top:224px;width:1px;height:464px;background:#d4d4d4"></div>
<div style="position:absolute;left:276px;top:224px;width:1px;height:464px;background:#d4d4d4"></div>
<div style="position:absolute;left:340px;top:224px;width:1px;height:464px;background:#d4d4d4"></div>
<div style="position:absolute;left:438px;top:224px;width:1px;height:464px;background:#d4d4d4"></div>
<div style="position:absolute;left:527px;top:224px;width:1px;height:464px;background:#d4d4d4"></div>
<div style="position:absolute;left:591px;top:224px;width:1px;height:464px;background:#d4d4d4"></div>
<div style="position:absolute;left:655px;top:224px;width:1px;height:464px;background:#d4d4d4"></div>
<div style="position:absolute;left:719px;top:224px;width:1px;height:464px;background:#d4d4d4"></div>
<div style="position:absolute;left:783px;top:224px;width:1px;height:464px;background:#d4d4d4"></div>
<div style="position:absolute;left:847px;top:224px;width:1px;height:464px;background:#d4d4d4"></div>
<div style="position:absolute;left:911px;top:224px;width:1px;height:464px;background:#d4d4d4"></div>
<div style="position:absolute;left:975px;top:224px;width:1px;height:464px;background:#d4d4d4"></div>
<div style="position:absolute;left:1039px;top:224px;width:1px;height:464px;background:#d4d4d4"></div>
<div style="position:absolute;left:1103px;top:224px;width:1px;height:464px;background:#d4d4d4"></div>
<div style="position:absolute;left:1167px;top:224px;width:1px;height:464px;background:#d4d4d4"></div>
<div style="position:absolute;left:1231px;top:224px;width:1px;height:464px;background:#d4d4d4"></div>
<div style="position:absolute;left:1295px;top:224px;width:1px;height:464px;background:#d4d4d4"></div>
<div style="position:absolute;left:25px;top:243px;width:1320px;height:1px;background:#d4d4d4"></div>
<div style="position:absolute;left:25px;top:263px;width:1320px;height:1px;background:#d4d4d4"></div>
<div style="position:absolute;left:25px;top:283px;width:1320px;height:1px;background:#d4d4d4"></div>
<div style="position:absolute;left:25px;top:303px;width:1320px;height:1px;background:#d4d4d4"></div>
<div style="position:absolute;left:25px;top:323px;width:1320px;height:1px;background:#d4d4d4"></div>
<div style="position:absolute;left:25px;top:343px;width:1320px;height:1px;background:#d4d4d4"></div>
<div style="position:absolute;left:25px;top:363px;width:1320px;height:1px;background:#d4d4d4"></div>
<div style="position:absolute;left:25px;top:383px;width:1320px;height:1px;background:#d4d4d4"></div>
<div style="position:absolute;left:25px;top:403px;width:1320px;height:1px;background:#d4d4d4"></div>
<div style="position:absolute;left:25px;top:423px;width:1320px;height:1px;background:#d4d4d4"></div>
<div style="position:absolute;left:25px;top:443px;width:1320px;height:1px;background:#d4d4d4"></div>
<div style="position:absolute;left:25px;top:463px;width:1320px;height:1px;background:#d4d4d4"></div>
<div style="position:absolute;left:25px;top:483px;width:1320px;height:1px;background:#d4d4d4"></div>
<div style="position:absolute;left:25px;top:503px;width:1320px;height:1px;background:#d4d4d4"></div>
<div style="position:absolute;left:25px;top:523px;width:1320px;height:1px;background:#d4d4d4"></div>
<div style="position:absolute;left:25px;top:543px;width:1320px;height:1px;background:#d4d4d4"></div>
<div style="position:absolute;left:25px;top:563px;width:1320px;height:1px;background:#d4d4d4"></div>
<div style="position:absolute;left:25px;top:583px;width:1320px;height:1px;background:#d4d4d4"></div>
<div style="position:absolute;left:25px;top:603px;width:1320px;height:1px;background:#d4d4d4"></div>
<div style="position:absolute;left:25px;top:623px;width:1320px;height:1px;background:#d4d4d4"></div>
<div style="position:absolute;left:25px;top:643px;width:1320px;height:1px;background:#d4d4d4"></div>
<div style="position:absolute;left:25px;top:663px;width:1320px;height:1px;background:#d4d4d4"></div>
<div style="position:absolute;left:25px;top:683px;width:1320px;height:1px;background:#d4d4d4"></div>
<div style="position:absolute;left:153px;top:324px;width:1px;height:19px;background:#fff"></div>
<div style="position:absolute;left:25px;top:223px;width:1px;height:465px;background:#ababab"></div>
<div style="position:absolute;left:0px;top:243px;width:25px;height:1px;background:#bdbdbd"></div>
<div style="position:absolute;left:0px;top:263px;width:25px;height:1px;background:#bdbdbd"></div>
<div style="position:absolute;left:0px;top:283px;width:25px;height:1px;background:#bdbdbd"></div>
<div style="position:absolute;left:0px;top:303px;width:25px;height:1px;background:#bdbdbd"></div>
<div style="position:absolute;left:0px;top:323px;width:25px;height:1px;background:#bdbdbd"></div>
<div style="position:absolute;left:0px;top:343px;width:25px;height:1px;background:#bdbdbd"></div>
<div style="position:absolute;left:0px;top:363px;width:25px;height:1px;background:#bdbdbd"></div>
<div style="position:absolute;left:0px;top:383px;width:25px;height:1px;background:#bdbdbd"></div>
<div style="position:absolute;left:0px;top:403px;width:25px;height:1px;background:#bdbdbd"></div>
<div style="position:absolute;left:0px;top:423px;width:25px;height:1px;background:#bdbdbd"></div>
<div style="position:absolute;left:0px;top:443px;width:25px;height:1px;background:#bdbdbd"></div>
<div style="position:absolute;left:0px;top:463px;width:25px;height:1px;background:#bdbdbd"></div>
<div style="position:absolute;left:0px;top:483px;width:25px;height:1px;background:#bdbdbd"></div>
<div style="position:absolute;left:0px;top:503px;width:25px;height:1px;background:#bdbdbd"></div>
<div style="position:absolute;left:0px;top:523px;width:25px;height:1px;background:#bdbdbd"></div>
<div style="position:absolute;left:0px;top:543px;width:25px;height:1px;background:#bdbdbd"></div>
<div style="position:absolute;left:0px;top:563px;width:25px;height:1px;background:#bdbdbd"></div>
<div style="position:absolute;left:0px;top:583px;width:25px;height:1px;background:#bdbdbd"></div>
<div style="position:absolute;left:0px;top:603px;width:25px;height:1px;background:#bdbdbd"></div>
<div style="position:absolute;left:0px;top:623px;width:25px;height:1px;background:#bdbdbd"></div>
<div style="position:absolute;left:0px;top:643px;width:25px;height:1px;background:#bdbdbd"></div>
<div style="position:absolute;left:0px;top:663px;width:25px;height:1px;background:#bdbdbd"></div>
<div style="position:absolute;left:0px;top:683px;width:25px;height:1px;background:#bdbdbd"></div>
<div style="position:absolute;left:0px;top:263px;width:24px;height:20px;background:#d2d2d2"></div>
<div style="position:absolute;left:24px;top:263px;width:2px;height:21px;background:#217346"></div>
<div class="t" style="left:-187px;width:400px;text-align:center;top:225px;font-size:12.5px;color:#262626;font-weight:normal;">1</div>
<div class="t" style="left:-187px;width:400px;text-align:center;top:245px;font-size:12.5px;color:#262626;font-weight:normal;">2</div>
<div class="t" style="left:-187px;width:400px;text-align:center;top:265px;font-size:12.5px;color:#217346;font-weight:normal;">3</div>
<div class="t" style="left:-187px;width:400px;text-align:center;top:285px;font-size:12.5px;color:#262626;font-weight:normal;">4</div>
<div class="t" style="left:-187px;width:400px;text-align:center;top:305px;font-size:12.5px;color:#262626;font-weight:normal;">5</div>
<div class="t" style="left:-187px;width:400px;text-align:center;top:325px;font-size:12.5px;color:#262626;font-weight:normal;">6</div>
<div class="t" style="left:-187px;width:400px;text-align:center;top:345px;font-size:12.5px;color:#262626;font-weight:normal;">7</div>
<div class="t" style="left:-187px;width:400px;text-align:center;top:365px;font-size:12.5px;color:#262626;font-weight:normal;">8</div>
<div class="t" style="left:-187px;width:400px;text-align:center;top:385px;font-size:12.5px;color:#262626;font-weight:normal;">9</div>
<div class="t" style="left:-187px;width:400px;text-align:center;top:405px;font-size:12.5px;color:#262626;font-weight:normal;">10</div>
<div class="t" style="left:-187px;width:400px;text-align:center;top:425px;font-size:12.5px;color:#262626;font-weight:normal;">11</div>
<div class="t" style="left:-187px;width:400px;text-align:center;top:445px;font-size:12.5px;color:#262626;font-weight:normal;">12</div>
<div class="t" style="left:-187px;width:400px;text-align:center;top:465px;font-size:12.5px;color:#262626;font-weight:normal;">13</div>
<div class="t" style="left:-187px;width:400px;text-align:center;top:485px;font-size:12.5px;color:#262626;font-weight:normal;">14</div>
<div class="t" style="left:-187px;width:400px;text-align:center;top:505px;font-size:12.5px;color:#262626;font-weight:normal;">15</div>
<div class="t" style="left:-187px;width:400px;text-align:center;top:525px;font-size:12.5px;color:#262626;font-weight:normal;">16</div>
<div class="t" style="left:-187px;width:400px;text-align:center;top:545px;font-size:12.5px;color:#262626;font-weight:normal;">17</div>
<div class="t" style="left:-187px;width:400px;text-align:center;top:565px;font-size:12.5px;color:#262626;font-weight:normal;">18</div>
<div class="t" style="left:-187px;width:400px;text-align:center;top:585px;font-size:12.5px;color:#262626;font-weight:normal;">19</div>
<div class="t" style="left:-187px;width:400px;text-align:center;top:605px;font-size:12.5px;color:#262626;font-weight:normal;">20</div>
<div class="t" style="left:-187px;width:400px;text-align:center;top:625px;font-size:12.5px;color:#262626;font-weight:normal;">21</div>
<div class="t" style="left:-187px;width:400px;text-align:center;top:645px;font-size:12.5px;color:#262626;font-weight:normal;">22</div>
<div class="t" style="left:-187px;width:400px;text-align:center;top:665px;font-size:12.5px;color:#262626;font-weight:normal;">23</div>
<div style="position:absolute;left:0px;top:688px;width:1345px;height:1px;background:#9b9b9b"></div>
<div style="position:absolute;left:1344px;top:223px;width:1px;height:466px;background:#9b9b9b"></div>
<div class="t" style="left:28px;top:225px;font-size:13.6px;color:#000;font-weight:normal;letter-spacing:0.12px;">Doctor</div>
<div class="t" style="left:92px;top:225px;font-size:13.6px;color:#000;font-weight:normal;letter-spacing:0.38px;">Patient</div>
<div class="t" style="left:28px;top:245px;font-size:13.6px;color:#000;font-weight:normal;letter-spacing:-0.37px;">Leon</div>
<div class="t" style="left:92px;top:245px;font-size:13.6px;color:#000;font-weight:normal;letter-spacing:0.2px;">Brown</div>
<div class="t" style="left:28px;top:265px;font-size:13.6px;color:#000;font-weight:normal;letter-spacing:-0.02px;">Strong</div>
<div class="t" style="left:92px;top:265px;font-size:13.6px;color:#000;font-weight:normal;letter-spacing:0.14px;">Smith</div>
<div class="t" style="left:28px;top:285px;font-size:13.6px;color:#000;font-weight:normal;letter-spacing:0.08px;">Krum</div>
<div class="t" style="left:92px;top:285px;font-size:13.6px;color:#000;font-weight:normal;letter-spacing:0.62px;">White</div>
<div class="t" style="left:28px;top:305px;font-size:13.6px;color:#000;font-weight:normal;letter-spacing:0.3px;">Zeroth</div>
<div class="t" style="left:92px;top:305px;font-size:13.6px;color:#000;font-weight:normal;letter-spacing:-0.02px;">Green</div>
<div class="t" style="left:92px;top:325px;font-size:13.6px;color:#000;font-weight:normal;letter-spacing:0.79px;">Whitefield</div>
<div class="t" style="left:92px;top:345px;font-size:13.6px;color:#000;font-weight:normal;letter-spacing:-0.9px;">Baca</div>
<div class="t" style="left:92px;top:365px;font-size:13.6px;color:#000;font-weight:normal;letter-spacing:-0.21px;">Gonzales</div>
<div class="t" style="left:92px;top:385px;font-size:13.6px;color:#000;font-weight:normal;letter-spacing:-0.43px;">Rios</div>
<div class="t" style="left:343px;top:265px;font-size:13.6px;color:#000;font-weight:normal;">Select Doctor</div>
<div class="t" style="left:343px;top:305px;font-size:13.6px;color:#000;font-weight:normal;letter-spacing:0.15px;">Select Patient</div>
<div style="position:absolute;left:437px;top:262px;width:92px;height:23px;border:2px solid #217346;box-sizing:border-box"></div>
<div style="position:absolute;left:524px;top:280px;width:6px;height:6px;background:#fff"></div>
<div style="position:absolute;left:525px;top:281px;width:5px;height:5px;background:#217346"></div>
<div style="position:absolute;left:1348px;top:206px;width:15px;height:15px;background:#fff;border:1px solid #ababab;box-sizing:border-box"></div>
<svg style="position:absolute;left:1351px;top:211px;" width="9" height="5" viewBox="0 0 9 5"><path d="M0 5 L4.5 0 L9 5Z" fill="#666"/></svg>
<div style="position:absolute;left:1348px;top:220px;width:15px;height:434px;background:#fff;border:1px solid #ababab;box-sizing:border-box"></div>
<div style="position:absolute;left:1348px;top:654px;width:15px;height:20px;background:#dadada"></div>
<div style="position:absolute;left:1348px;top:674px;width:15px;height:15px;background:#fff;border:1px solid #ababab;box-sizing:border-box"></div>
<svg style="position:absolute;left:1351px;top:679px;" width="9" height="5" viewBox="0 0 9 5"><path d="M0 0 L4.5 5 L9 0Z" fill="#666"/></svg>
<div style="position:absolute;left:0px;top:689px;width:1366px;height:27px;background:#e6e6e6"></div>
<div style="position:absolute;left:100px;top:688px;width:65px;height:25px;background:#fff;border-left:1px solid #ababab;border-right:1px solid #ababab;box-sizing:border-box"></div>
<div style="position:absolute;left:100px;top:710px;width:65px;height:3px;background:#217346"></div>
<div class="t" style="left:112px;top:692px;font-size:12.5px;color:#217346;font-weight:bold;">Sheet1</div>
<svg style="position:absolute;left:27px;top:698px;" width="5" height="8" viewBox="0 0 5 8"><path d="M5 0 V8 L0 4Z" fill="#c4c4c4"/></svg>
<svg style="position:absolute;left:56px;top:698px;" width="5" height="8" viewBox="0 0 5 8"><path d="M0 0 V8 L5 4Z" fill="#c4c4c4"/></svg>
<svg style="position:absolute;left:198px;top:694px;" width="17" height="17" viewBox="0 0 17 17"><circle cx="8.5" cy="8.5" r="7.8" fill="none" stroke="#7a7a7a" stroke-width="1.2"/><path d="M4.5 8.5 H12.5 M8.5 4.5 V12.5" stroke="#7a7a7a" stroke-width="1.6"/></svg>
<div style="position:absolute;left:820px;top:697px;width:2px;height:2px;background:#9b9b9b"></div>
<div style="position:absolute;left:820px;top:701px;width:2px;height:2px;background:#9b9b9b"></div>
<div style="position:absolute;left:820px;top:705px;width:2px;height:2px;background:#9b9b9b"></div>
<div style="position:absolute;left:836px;top:695px;width:15px;height:15px;background:#fff;border:1px solid #ababab;box-sizing:border-box"></div>
<svg style="position:absolute;left:841px;top:698px;" width="5" height="9" viewBox="0 0 5 9"><path d="M5 0 V9 L0 4.5Z" fill="#666"/></svg>
<div style="position:absolute;left:850px;top:695px;width:454px;height:15px;background:#fff;border:1px solid #ababab;box-sizing:border-box"></div>
<div style="position:absolute;left:1304px;top:695px;width:26px;height:15px;background:#dadada"></div>
<div style="position:absolute;left:1332px;top:695px;width:15px;height:15px;background:#fff;border:1px solid #ababab;box-sizing:border-box"></div>
<svg style="position:absolute;left:1337px;top:698px;" width="5" height="9" viewBox="0 0 5 9"><path d="M0 0 V9 L5 4.5Z" fill="#666"/></svg>
<div style="position:absolute;left:0px;top:716px;width:1366px;height:22px;background:#f3f3f3"></div>
<div style="position:absolute;left:0px;top:716px;width:1366px;height:1px;background:#dadada"></div>
<div class="t" style="left:8px;top:716px;font-size:11.2px;color:#444;font-weight:normal;">Ready</div>
<svg style="position:absolute;left:58px;top:720px;" width="14" height="13" viewBox="0 0 14 13"><circle cx="3.5" cy="3.5" r="3.3" fill="#666"/><rect x="2.5" y="5.5" width="11" height="7" fill="#fff" stroke="#666"/><rect x="7" y="1" width="6.5" height="3" fill="#666"/><path d="M4 8 H13 M4 10.5 H13 M6.5 5.5 V12.5 M9 5.5 V12.5 M11.5 5.5 V12.5" stroke="#888" stroke-width="0.8"/></svg>
<div style="position:absolute;left:1080px;top:717px;width:38px;height:21px;background:#c6c6c6"></div>
<svg style="position:absolute;left:1092px;top:720px;" width="13" height="13" viewBox="0 0 13 13"><path d="M0.75 0.75 H12.25 V12.25 H0.75Z M0.75 4.6 H12.25 M0.75 8.4 H12.25 M4.6 0.75 V12.25 M8.4 0.75 V12.25" fill="none" stroke="#707070" stroke-width="1.5"/></svg>
<svg style="position:absolute;left:1130px;top:720px;" width="14" height="13" viewBox="0 0 14 13"><rect x="0.75" y="0.75" width="12.5" height="11.5" fill="none" stroke="#707070" stroke-width="1.5"/><rect x="3.5" y="3" width="7" height="7" fill="none" stroke="#707070" stroke-width="1.2"/><path d="M5 5.2 H9 M5 6.6 H9 M5 8 H9" stroke="#707070" stroke-width="0.9"/></svg>
<svg style="position:absolute;left:1168px;top:720px;" width="14" height="13" viewBox="0 0 14 13"><path d="M0.75 0.75 H13.25 V12.25 H0.75Z M0.75 7.5 H8.5 V0.75 M4.6 0.75 V7.5" fill="none" stroke="#707070" stroke-width="1.4"/></svg>
<div style="position:absolute;left:1199px;top:726px;width:6px;height:2px;background:#666"></div>
<div style="position:absolute;left:1209px;top:727px;width:100px;height:1px;background:#a6a6a6"></div>
<div style="position:absolute;left:1257px;top:721px;width:5px;height:11px;background:#777"></div>
<div style="position:absolute;left:1312px;top:726px;width:8px;height:2px;background:#666"></div>
<div style="position:absolute;left:1315px;top:723px;width:2px;height:8px;background:#666"></div>
<div class="t" style="left:1331px;top:716px;font-size:12px;color:#444;font-weight:normal;">100%</div>
<div style="position:absolute;left:478px;top:374px;width:394px;height:318px;background:#f0f0f0;border:1px solid #8a8a8a;box-sizing:border-box;box-shadow:0 3px 17px rgba(0,0,0,0.34)"></div>
<div style="position:absolute;left:479px;top:375px;width:392px;height:30px;background:#fff"></div>
<div class="t" style="left:487px;top:380px;font-size:11.6px;color:#000000;font-weight:normal;">Data Validation</div>
<div class="t" style="left:800px;top:380px;font-size:12.5px;color:#000000;font-weight:normal;">?</div>
<svg style="position:absolute;left:843px;top:384px;" width="11" height="11" viewBox="0 0 11 11"><path d="M0.5 0.5 L10.5 10.5 M10.5 0.5 L0.5 10.5" stroke="#111" stroke-width="1.1"/></svg>
<div style="position:absolute;left:485px;top:433px;width:378px;height:220px;background:#fff;border:1px solid #d9d9d9;box-sizing:border-box"></div>
<div style="position:absolute;left:546px;top:414px;width:93px;height:20px;background:#f0f0f0;border:1px solid #d9d9d9;border-bottom:none;box-sizing:border-box"></div>
<div style="position:absolute;left:638px;top:414px;width:69px;height:20px;background:#f0f0f0;border:1px solid #d9d9d9;border-bottom:none;box-sizing:border-box"></div>
<div style="position:absolute;left:485px;top:412px;width:62px;height:23px;background:#fff;border:1px solid #d9d9d9;border-bottom:none;box-sizing:border-box"></div>
<div class="t" style="left:494px;top:414px;font-size:11.5px;color:#000000;font-weight:normal;">Settings</div>
<div class="t" style="left:554px;top:415px;font-size:11.5px;color:#000000;font-weight:normal;letter-spacing:0.14px;">Input Message</div>
<div class="t" style="left:647px;top:415px;font-size:11.5px;color:#000000;font-weight:normal;">Error Alert</div>
<div class="t" style="left:494px;top:440px;font-size:11.8px;color:#000000;font-weight:normal;">Validation criteria</div>
<div style="position:absolute;left:590px;top:449px;width:266px;height:1px;background:#dcdcdc"></div>
<div class="t" style="left:503px;top:460px;font-size:11.5px;color:#000000;font-weight:normal;letter-spacing:0.35px;">Allow:</div>
<div style="position:absolute;left:503px;top:475px;width:8px;height:1px;background:#000"></div>
<div style="position:absolute;left:503px;top:479px;width:156px;height:22px;background:#fff;border:1px solid #adadad;box-sizing:border-box"></div>
<div class="t" style="left:507px;top:480px;font-size:11.2px;color:#000000;font-weight:normal;">Any value</div>
<div style="position:absolute;left:641px;top:480px;width:17px;height:20px;background:#cce4f7;border:1px solid #005499;box-sizing:border-box"></div>
<svg style="position:absolute;left:645px;top:487px;" width="9" height="5" viewBox="0 0 9 5"><path d="M0.5 0.5 L4.5 4.5 L8.5 0.5" fill="none" stroke="#333" stroke-width="1.1"/></svg>
<div style="position:absolute;left:668px;top:480px;width:13px;height:13px;background:#fff;border:1px solid #c8c8c8;box-sizing:border-box"></div>
<svg style="position:absolute;left:670px;top:482px;" width="9" height="9" viewBox="0 0 9 9"><path d="M0.5 4.5 L3.3 7.5 L8.5 1" fill="none" stroke="#b4b4b4" stroke-width="1.2"/></svg>
<div class="t" style="left:685px;top:477px;font-size:11.5px;color:#6d6d6d;font-weight:normal;letter-spacing:0.36px;">Ignore blank</div>
<div style="position:absolute;left:503px;top:500px;width:156px;height:106px;background:#fff;border:1px solid #646464;box-sizing:border-box"></div>
<div style="position:absolute;left:504px;top:540px;width:154px;height:13px;background:#0078d7;outline:1px dotted #f0a040;outline-offset:-1px"></div>
<div class="t" style="left:506px;top:498px;font-size:11.5px;color:#000000;font-weight:normal;">Any value</div>
<div class="t" style="left:506px;top:511px;font-size:11.5px;color:#000000;font-weight:normal;letter-spacing:0.2px;">Whole number</div>
<div class="t" style="left:506px;top:524px;font-size:11.5px;color:#000000;font-weight:normal;">Decimal</div>
<div class="t" style="left:506px;top:537px;font-size:11.5px;color:#fff;font-weight:normal;">List</div>
<div class="t" style="left:506px;top:550px;font-size:11.5px;color:#000000;font-weight:normal;">Date</div>
<div class="t" style="left:506px;top:563px;font-size:11.5px;color:#000000;font-weight:normal;">Time</div>
<div class="t" style="left:506px;top:576px;font-size:11.5px;color:#000000;font-weight:normal;">Text length</div>
<div class="t" style="left:506px;top:589px;font-size:11.5px;color:#000000;font-weight:normal;">Custom</div>
<div style="position:absolute;left:494px;top:629px;width:13px;height:13px;background:#fff;border:1px solid #adadad;box-sizing:border-box"></div>
<div class="t" style="left:511px;top:627px;font-size:11.5px;color:#6d6d6d;font-weight:normal;letter-spacing:0.05px;">Apply these changes to all other cells with the same settings</div>
<div style="position:absolute;left:485px;top:662px;width:74px;height:22px;background:#e1e1e1;border:1px solid #adadad;box-sizing:border-box"></div>
<div class="t" style="left:501px;top:663px;font-size:11.5px;color:#000000;font-weight:normal;">Clear All</div>
<div style="position:absolute;left:501px;top:678px;width:7px;height:1px;background:#000"></div>
<div style="position:absolute;left:706px;top:662px;width:74px;height:22px;background:#e1e1e1;border:2px solid #0078d7;box-sizing:border-box"></div>
<div class="t" style="left:735.4px;top:663px;font-size:11px;color:#000000;font-weight:normal;">OK</div>
<div style="position:absolute;left:790px;top:662px;width:74px;height:22px;background:#e1e1e1;border:1px solid #adadad;box-sizing:border-box"></div>
<div class="t" style="left:810.4px;top:663px;font-size:10.9px;color:#000000;font-weight:normal;">Cancel</div>
<div style="position:absolute;left:0px;top:738px;width:1366px;height:30px;background:#0b0b0b"></div>
<div style="position:absolute;left:752px;top:738px;width:31px;height:30px;background:#3a3a3a"></div>
<div style="position:absolute;left:74px;top:766px;width:22px;height:2px;background:#8fc8f0"></div>
<div style="position:absolute;left:229px;top:766px;width:22px;height:2px;background:#8fc8f0"></div>
<div style="position:absolute;left:477px;top:766px;width:22px;height:2px;background:#8fc8f0"></div>
<div style="position:absolute;left:601px;top:766px;width:22px;height:2px;background:#8fc8f0"></div>
<div style="position:absolute;left:752px;top:766px;width:31px;height:2px;background:#8fc8f0"></div>
<svg style="position:absolute;left:10px;top:745px;" width="16" height="16" viewBox="0 0 16 16"><g fill="#fff"><path d="M0 2.3 L6.8 1.3 V7.6 H0Z"/><path d="M7.6 1.2 L16 0 V7.6 H7.6Z"/><path d="M0 8.4 H6.8 V14.7 L0 13.7Z"/><path d="M7.6 8.4 H16 V16 L7.6 14.8Z"/></g></svg>
<svg style="position:absolute;left:47px;top:746px;" width="14" height="14" viewBox="0 0 14 14"><path d="M13.30 5.87 L13.30 8.13 L11.56 8.13 L11.03 9.42 L12.25 10.66 L10.66 12.25 L9.42 11.03 L8.13 11.56 L8.13 13.30 L5.87 13.30 L5.87 11.56 L4.58 11.03 L3.34 12.25 L1.75 10.66 L2.97 9.42 L2.44 8.13 L0.70 8.13 L0.70 5.87 L2.44 5.87 L2.97 4.58 L1.75 3.34 L3.34 1.75 L4.58 2.97 L5.87 2.44 L5.87 0.70 L8.13 0.70 L8.13 2.44 L9.42 2.97 L10.66 1.75 L12.25 3.34 L11.03 4.58 L11.56 5.87Z M7 4.6 A2.4 2.4 0 1 0 7 9.4 A2.4 2.4 0 1 0 7 4.6Z" fill="#fff" fill-rule="evenodd"/></svg>
<svg style="position:absolute;left:77px;top:745px;" width="16" height="16" viewBox="0 0 16 16"><path d="M0 2 H6 L7.5 3.5 H16 V15 H0Z" fill="#f0c24f"/><path d="M0 5 H16 V15 H0Z" fill="#f7d774"/><path d="M4 9 H12 V15 H10 V11.5 H6 V15 H4Z" fill="#2d89d6"/></svg>
<svg style="position:absolute;left:108px;top:745px;" width="16" height="16" viewBox="0 0 16 16"><rect x="3" y="1" width="13" height="10" fill="#cfd8dc" stroke="#90a4ae"/><path d="M4.5 7 L7 4 L9.5 8 L12 5 L14.5 6" fill="none" stroke="#1e88e5" stroke-width="1.1"/><path d="M7 11 H12 V13 H14 V15 H5 V13 H7Z" fill="#b0bec5"/><rect x="0" y="5" width="3" height="11" fill="#90a4ae"/><rect x="0.8" y="6" width="1.5" height="1.5" fill="#7cb342"/></svg>
<svg style="position:absolute;left:139px;top:745px;" width="16" height="16" viewBox="0 0 16 16"><rect x="0" y="0" width="16" height="16" rx="3" fill="#fafafa"/><path d="M7 1 C10 2 13 4 12.5 7 C12 11 8 12.5 8 14" fill="none" stroke="#1e88e5" stroke-width="1.1"/><path d="M6 2.5 C5 5 8 7 9 8 M3 14 C6 15 9 13 11 11" fill="none" stroke="#f5b400" stroke-width="1"/><circle cx="7" cy="10" r="1.2" fill="#43a047"/><path d="M12 3 L9 10" stroke="#29b6f6" stroke-width="0.9"/></svg>
<svg style="position:absolute;left:170px;top:745px;" width="16" height="16" viewBox="0 0 16 16"><rect x="0" y="0" width="16" height="16" rx="1" fill="#d32f2f"/><rect x="0" y="8" width="16" height="8" fill="#a01818"/><circle cx="8" cy="10" r="4.2" fill="#111" stroke="#111" stroke-width="1.6" stroke-dasharray="1.3 1"/><path d="M3 2.5 L12.5 12" stroke="#f2f2f2" stroke-width="2"/><path d="M13 3 L3.5 12.5" stroke="#f2f2f2" stroke-width="2"/><circle cx="12.8" cy="3" r="2.2" fill="none" stroke="#f2f2f2" stroke-width="1.3"/></svg>
<svg style="position:absolute;left:201px;top:745px;" width="16" height="16" viewBox="0 0 16 16"><rect x="1.5" y="0" width="13" height="16" fill="#fff"/><rect x="3" y="1.5" width="10" height="3" fill="#101010"/><g fill="#101010"><rect x="3.5" y="6" width="2" height="2"/><rect x="7" y="6" width="2" height="2"/><rect x="10.5" y="6" width="2" height="2"/><rect x="3.5" y="9.5" width="2" height="2"/><rect x="7" y="9.5" width="2" height="2"/><rect x="10.5" y="9.5" width="2" height="2"/><rect x="3.5" y="13" width="2" height="2"/><rect x="7" y="13" width="2" height="2"/><rect x="10.5" y="13" width="2" height="2"/></g></svg>
<svg style="position:absolute;left:232px;top:745px;" width="16" height="16" viewBox="0 0 16 16"><path d="M3.5 8.2 H13.8 A5.9 5.9 0 1 0 12.6 12.8" fill="none" stroke="#1e88e5" stroke-width="3"/><path d="M1.2 7.5 C2 3 5.5 1.5 8 1.5" fill="none" stroke="#1e88e5" stroke-width="1.5"/></svg>
<svg style="position:absolute;left:263px;top:745px;" width="16" height="16" viewBox="0 0 16 16"><circle cx="8" cy="8" r="7.5" fill="#db4437"/><path d="M8 8 L1.5 4.25 A7.5 7.5 0 0 0 8 15.5Z" fill="#0f9d58"/><path d="M8 8 L8 15.5 A7.5 7.5 0 0 0 14.5 4.25Z" fill="#f4b400"/><circle cx="8" cy="8" r="3.6" fill="#fff"/><circle cx="8" cy="8" r="2.8" fill="#4285f4"/></svg>
<svg style="position:absolute;left:294px;top:745px;" width="16" height="16" viewBox="0 0 16 16"><rect x="0" y="6" width="15" height="10" rx="1" fill="#fff"/><path d="M0 2 L14 0 L14.6 3.5 L0.6 5.5Z" fill="#fff"/><path d="M3 1.6 L4.5 5 M6.5 1.1 L8 4.5 M10 0.6 L11.5 4" stroke="#101010" stroke-width="1.2"/></svg>
<svg style="position:absolute;left:325px;top:745px;" width="16" height="16" viewBox="0 0 16 16"><path d="M6.2 0.5 H9.8 L14.5 13.5 H1.5Z" fill="#ff8800"/><path d="M5.1 4 H10.9 L11.6 6 H4.4Z M3.7 8 H12.3 L13 10 H3Z" fill="#fff"/><rect x="0" y="13" width="16" height="3" rx="0.8" fill="#ff8800"/></svg>
<svg style="position:absolute;left:356px;top:745px;" width="16" height="16" viewBox="0 0 16 16"><rect x="0.5" y="0.5" width="15" height="15" fill="none" stroke="#fff"/><path d="M1 15 L6 7 L9 11 L11 8 L15 15Z" fill="#fff"/></svg>
<svg style="position:absolute;left:387px;top:745px;" width="16" height="16" viewBox="0 0 16 16"><ellipse cx="8" cy="6" rx="7.5" ry="5" fill="#e0e0e0" stroke="#c62828" stroke-width="1.2"/><path d="M4 5 L8 9 M6 3 L9 8" stroke="#555" stroke-width="0.8"/><circle cx="9" cy="13" r="2" fill="none" stroke="#1e88e5" stroke-width="1.3"/><circle cx="13" cy="12" r="2" fill="none" stroke="#1e88e5" stroke-width="1.3"/></svg>
<svg style="position:absolute;left:418px;top:745px;" width="16" height="16" viewBox="0 0 16 16"><rect x="0" y="0" width="16" height="16" fill="#4aa3df"/><rect x="1.5" y="1.5" width="13" height="13" fill="#fff"/><path d="M3 3 H10 V5.5 H7.8 V14 H5.2 V5.5 H3Z" fill="#101840"/><text x="10" y="13.5" font-family="Liberation Sans" font-size="7" font-weight="bold" fill="#d32f2f">3</text><circle cx="3" cy="12.5" r="1.6" fill="#4aa3df"/></svg>
<svg style="position:absolute;left:449px;top:745px;" width="16" height="16" viewBox="0 0 16 16"><rect x="3" y="3" width="5" height="8" rx="2.5" fill="#fff"/><path d="M1.5 8 C1.5 12 9.5 12 9.5 8 M5.5 11.5 V15 M3 15 H8" fill="none" stroke="#fff" stroke-width="1.1"/><path d="M8 0 H16 V6 H12 L10 8 V6 H8Z" fill="#fff"/></svg>
<svg style="position:absolute;left:480px;top:745px;" width="16" height="16" viewBox="0 0 16 16"><circle cx="8" cy="8" r="7.4" fill="none" stroke="#9e9e9e" stroke-width="1.2"/><g fill="none" stroke="#9e9e9e" stroke-width="1.2"><path d="M8 8 C5.5 7 4.5 4.5 6 2.5"/><path d="M8 8 C10 6.3 12.6 6.5 13.8 8.5"/><path d="M8 8 C8.3 10.7 6.5 12.5 4 12.5"/></g></svg>
<svg style="position:absolute;left:511px;top:745px;" width="16" height="16" viewBox="0 0 16 16"><rect x="0" y="0" width="16" height="16" fill="#2a0e3a"/><path d="M3 8 L8 2.5 L13.5 6 L9.5 13.5Z" fill="none" stroke="#c08ad8" stroke-width="1.3"/></svg>
<svg style="position:absolute;left:542px;top:745px;" width="16" height="16" viewBox="0 0 16 16"><rect x="0.7" y="0.7" width="14.6" height="14.6" fill="#001d26" stroke="#31c5f4" stroke-width="1.4"/><text x="8" y="11.8" text-anchor="middle" font-family="Liberation Sans" font-size="8.6" font-weight="bold" fill="#31c5f4">Ps</text></svg>
<svg style="position:absolute;left:573px;top:745px;" width="16" height="16" viewBox="0 0 16 16"><rect x="0.7" y="0.7" width="14.6" height="14.6" fill="#261300" stroke="#ff7c00" stroke-width="1.4"/><text x="8" y="11.8" text-anchor="middle" font-family="Liberation Sans" font-size="8.6" font-weight="bold" fill="#ff7c00">Ai</text></svg>
<svg style="position:absolute;left:604px;top:745px;" width="16" height="16" viewBox="0 0 16 16"><rect x="0.7" y="0.7" width="14.6" height="14.6" fill="#072600" stroke="#4bf000" stroke-width="1.4"/><text x="8" y="11.8" text-anchor="middle" font-family="Liberation Sans" font-size="8.6" font-weight="bold" fill="#4bf000">Dw</text></svg>
<svg style="position:absolute;left:635px;top:745px;" width="16" height="16" viewBox="0 0 16 16"><rect x="0.7" y="0.7" width="14.6" height="14.6" fill="#26000f" stroke="#ff3f94" stroke-width="1.4"/><text x="8" y="11.8" text-anchor="middle" font-family="Liberation Sans" font-size="8.6" font-weight="bold" fill="#ff3f94">Id</text></svg>
<svg style="position:absolute;left:666px;top:745px;" width="16" height="16" viewBox="0 0 16 16"><rect x="0" y="0" width="16" height="16" fill="#da1f26"/><g fill="none" stroke="#fff" stroke-width="1.2"><ellipse cx="6" cy="8" rx="4" ry="3.5"/><ellipse cx="10" cy="8" rx="4" ry="3.5"/><ellipse cx="8" cy="8" rx="6.5" ry="5"/></g></svg>
<svg style="position:absolute;left:697px;top:745px;" width="16" height="16" viewBox="0 0 16 16"><rect x="6" y="3" width="10" height="10" fill="#fff"/><path d="M6 4 L11 8 L16 4" fill="none" stroke="#0072c6" stroke-width="1.2"/><path d="M0 2 L9 0 V16 L0 14Z" fill="#0072c6"/><ellipse cx="4.5" cy="8" rx="2.3" ry="3" fill="none" stroke="#fff" stroke-width="1.4"/></svg>
<svg style="position:absolute;left:728px;top:745px;" width="16" height="16" viewBox="0 0 16 16"><rect x="7" y="2" width="9" height="12" fill="#fff"/><path d="M9 5 H14 M9 8 H14 M9 11 H14" stroke="#d24726"/><path d="M0 2 L9 0 V16 L0 14Z" fill="#d24726"/><path d="M2.5 12 V4.5 H5 C7 4.5 7 8.5 5 8.5 H2.5" fill="none" stroke="#fff" stroke-width="1.4"/></svg>
<svg style="position:absolute;left:759px;top:745px;" width="16" height="16" viewBox="0 0 16 16"><rect x="7" y="2" width="9" height="12" fill="#fff"/><path d="M8 5 H15 M8 8 H15 M8 11 H15 M11.5 2 V14" stroke="#217346"/><path d="M0 2 L9 0 V16 L0 14Z" fill="#217346"/><path d="M2 4.5 L6.5 11.5 M6.5 4.5 L2 11.5" stroke="#fff" stroke-width="1.5"/></svg>
<svg style="position:absolute;left:790px;top:745px;" width="16" height="16" viewBox="0 0 16 16"><rect x="0.7" y="0.7" width="14.6" height="14.6" fill="#2a0606" stroke="#e02020" stroke-width="1.4"/><path d="M3.5 11.5 C6 9 8 6 8 3.5 C8 6 10 9 12.5 11 C10 10 6 10 3.5 11.5Z" fill="none" stroke="#ddd" stroke-width="0.9"/></svg>
<svg style="position:absolute;left:820px;top:745px;" width="16" height="16" viewBox="0 0 16 16"><rect x="7" y="2" width="9" height="12" fill="#fff"/><path d="M9 5 H14 M9 8 H14 M9 11 H14" stroke="#2b579a"/><path d="M0 2 L9 0 V16 L0 14Z" fill="#2b579a"/><path d="M1.5 5 L3 11 L4.5 7 L6 11 L7.5 5" fill="none" stroke="#fff" stroke-width="1.1"/></svg>
<svg style="position:absolute;left:850px;top:745px;" width="16" height="16" viewBox="0 0 16 16"><rect x="2" y="0" width="12" height="15" fill="#dfe9f5" stroke="#7b9ccc"/><path d="M4 3 L6 7 M6 3 L4 7" stroke="#ff8a00" stroke-width="1.3"/><path d="M8 4 H12 M4 9 H12 M4 11 H12 M4 13 H12" stroke="#2b579a"/><path d="M0 13 H16 V16 H0Z" fill="#7b9ccc"/></svg>
<svg style="position:absolute;left:879px;top:745px;" width="16" height="16" viewBox="0 0 16 16"><g fill="none" stroke="#c62828" stroke-width="1.5"><circle cx="5" cy="9" r="3"/><circle cx="9" cy="8" r="3"/><circle cx="12" cy="10" r="2.5"/></g><path d="M2 1 L15 15" stroke="#e8d9b0" stroke-width="1.2"/></svg>
<svg style="position:absolute;left:910px;top:745px;" width="16" height="16" viewBox="0 0 16 16"><g fill="none" stroke="#c62828" stroke-width="1.5"><circle cx="5" cy="9" r="3"/><circle cx="9" cy="8" r="3"/><circle cx="12" cy="10" r="2.5"/></g><path d="M2 1 L15 15" stroke="#e8d9b0" stroke-width="1.2"/></svg>
<svg style="position:absolute;left:940px;top:745px;" width="16" height="16" viewBox="0 0 16 16"><rect x="0" y="0" width="16" height="16" rx="3" fill="#29a3e0"/><circle cx="9" cy="7" r="5" fill="none" stroke="#fff" stroke-width="1.2"/><path d="M2 14 L9 7" stroke="#fff" stroke-width="1.5"/></svg>
<svg style="position:absolute;left:970px;top:745px;" width="16" height="16" viewBox="0 0 16 16"><rect x="0" y="0" width="16" height="16" rx="3" fill="#1b3a6b"/><path d="M3 2 L5 13 L8 7 L11 13 L13 2" fill="none" stroke="#fff" stroke-width="1.8"/></svg>
<svg style="position:absolute;left:1000px;top:745px;" width="16" height="16" viewBox="0 0 16 16"><circle cx="8" cy="8" r="8" fill="#1e3f8a"/><path d="M1 7 L15 3 M1 8 L15 6 M1 9 L15 9 M1 10 L14 12" stroke="#cfe0ff" stroke-width="0.9"/></svg>
<div class="t" style="left:1035px;top:741px;font-size:12px;color:#ffffff;font-weight:normal;">EN</div>
<svg style="position:absolute;left:1070px;top:750px;" width="12" height="7" viewBox="0 0 12 7"><path d="M0.8 6.2 L6 1 L11.2 6.2" fill="none" stroke="#fff" stroke-width="1.3"/></svg>
<svg style="position:absolute;left:1100px;top:745px;" width="16" height="16" viewBox="0 0 16 16"><circle cx="8" cy="8" r="7.4" fill="none" stroke="#fff" stroke-width="1.1"/><g fill="none" stroke="#fff" stroke-width="1.1"><path d="M8 8 C5.5 7 4.5 4.5 6 2.5"/><path d="M8 8 C10 6.3 12.6 6.5 13.8 8.5"/><path d="M8 8 C8.3 10.7 6.5 12.5 4 12.5"/></g></svg>
<svg style="position:absolute;left:1132px;top:746px;" width="17" height="14" viewBox="0 0 17 14"><path d="M1.5 0 V3 M4 0 V3" stroke="#fff" stroke-width="1"/><path d="M0.3 3 H5.2 V5.5 L2.75 8 L0.3 5.5Z" fill="#fff"/><path d="M2.75 8 V12" stroke="#fff" stroke-width="1"/><rect x="5.5" y="4.5" width="10" height="6" fill="none" stroke="#fff" stroke-width="1"/><rect x="7" y="6" width="8" height="3" fill="#fff"/><rect x="15.5" y="6" width="1.5" height="3" fill="#fff"/></svg>
<svg style="position:absolute;left:1163px;top:745px;" width="17" height="16" viewBox="0 0 17 16"><path d="M2.5 0.5 V4.5 M0.8 1.5 L4.2 3.5 M4.2 1.5 L0.8 3.5" stroke="#fff" stroke-width="0.9"/><g fill="none" stroke="#8a8a8a" stroke-width="1.1"><path d="M3 14.5 A11 11 0 0 1 14.5 3.5"/><path d="M6.3 14.5 A7.7 7.7 0 0 1 14.5 6.8"/><path d="M9.6 14.5 A4.4 4.4 0 0 1 14.5 10.1"/></g><circle cx="14.5" cy="14.5" r="1.2" fill="#8a8a8a"/></svg>
<svg style="position:absolute;left:1196px;top:747px;" width="15" height="13" viewBox="0 0 15 13"><path d="M0.6 4 H3 L7 0.8 V12.2 L3 9 H0.6Z" fill="none" stroke="#fff" stroke-width="1.1"/><path d="M9.5 4.5 L14 9 M14 4.5 L9.5 9" stroke="#fff" stroke-width="1.1"/></svg>
<svg style="position:absolute;left:1228px;top:745px;" width="17" height="17" viewBox="0 0 17 17"><path d="M12.5 0.8 L15.2 3 L8 13 L6 14.5 L5.5 12Z" fill="none" stroke="#fff" stroke-width="1.1"/><path d="M9.5 3 L12.5 5.2" stroke="#fff" stroke-width="0.9"/><path d="M5 15.8 C1.5 16 0.8 12.5 3.2 11.2 M13.5 7.5 C16.2 7.8 16.3 10.3 14 10.8" fill="none" stroke="#fff" stroke-width="1.1"/></svg>
<div class="t" style="left:1258px;top:743px;font-size:12px;color:#ffffff;font-weight:normal;">10:47 AM</div>
<svg style="position:absolute;left:1325px;top:745px;" width="17" height="17" viewBox="0 0 17 17"><path d="M0.6 0.6 H15.4 V12 H10 L8 14.5 L6 12 H0.6Z" fill="none" stroke="#fff" stroke-width="1.2"/></svg>
<div style="position:absolute;left:1361px;top:738px;width:1px;height:30px;background:#555"></div>
</body></html>
